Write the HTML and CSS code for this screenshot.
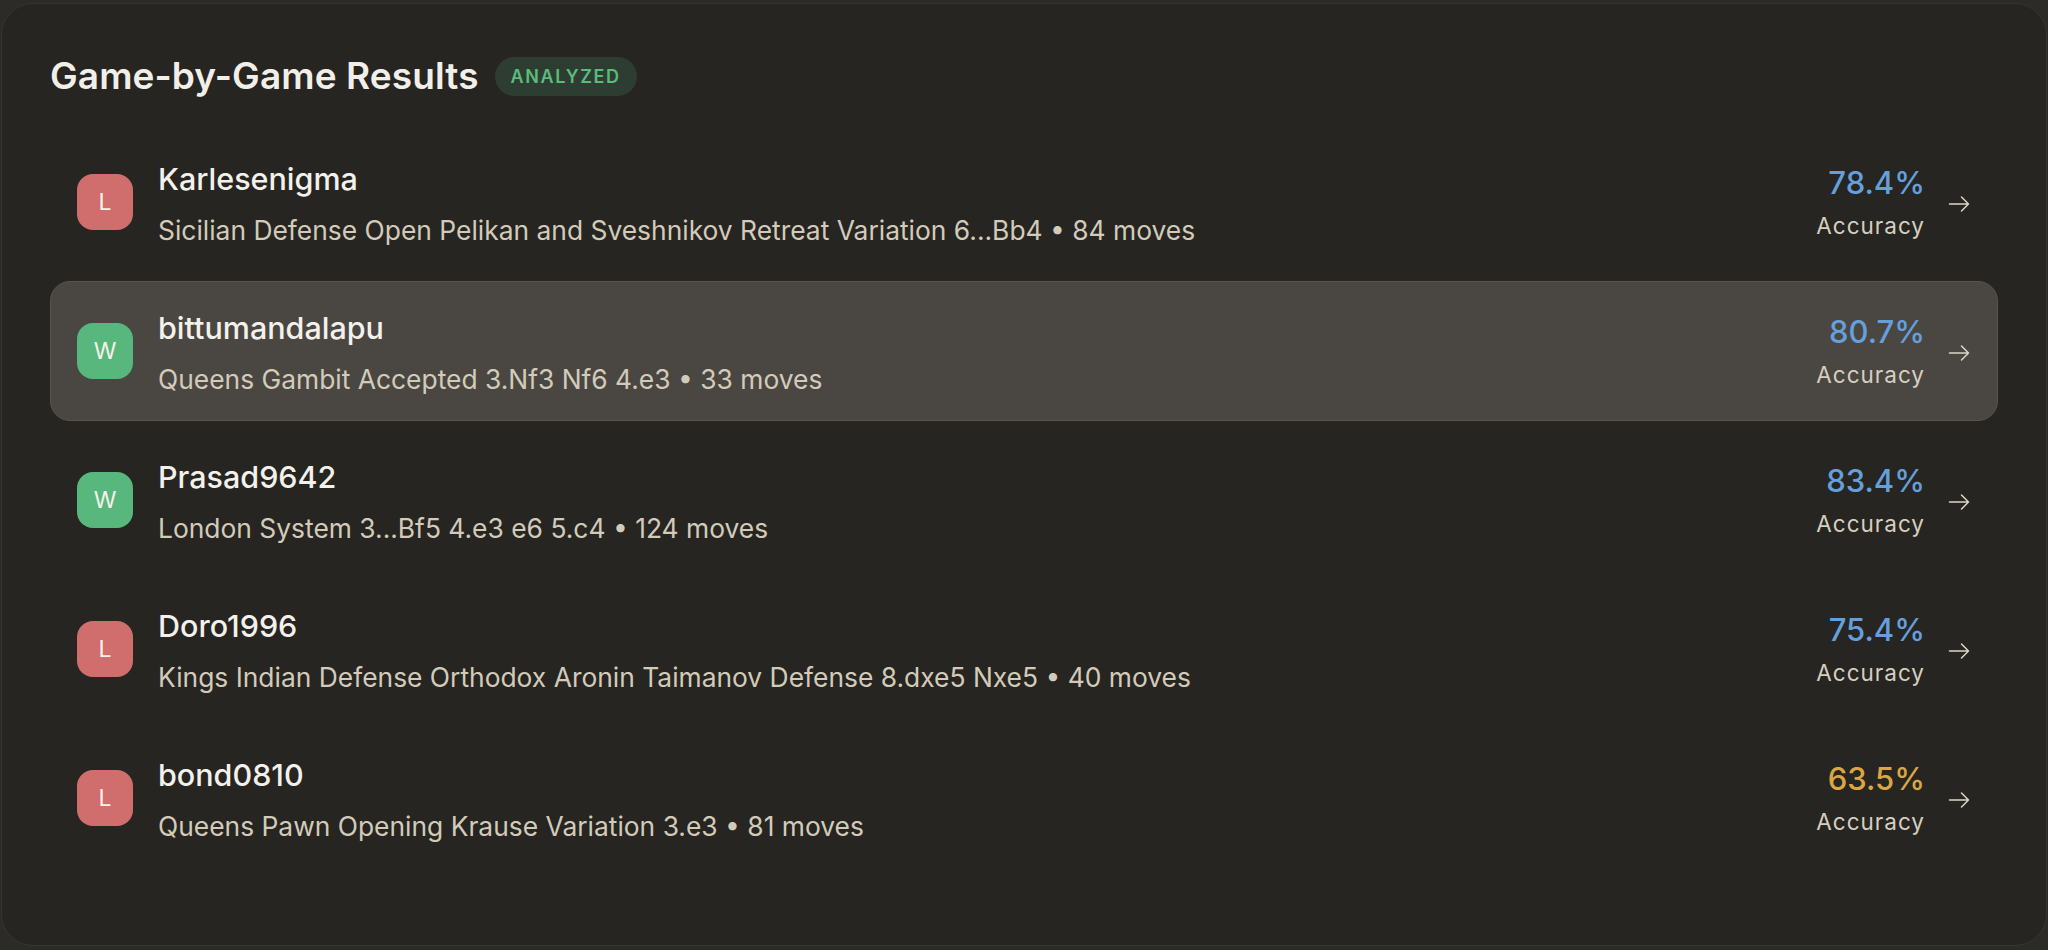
FILE: index.html
```html
<!DOCTYPE html>
<html lang="en">
<head>
<meta charset="utf-8">
<title>Game-by-Game Results</title>
<link rel="stylesheet" href="styles.css">
</head>
<body>
<section class="card">
  <header class="card-head">
    <h2 class="title">Game-by-Game Results</h2>
    <span class="badge">ANALYZED</span>
  </header>
  <ul class="games">
    <li class="game">
      <span class="avatar loss">L</span>
      <div class="info">
        <div class="name">Karlesenigma</div>
        <div class="meta">Sicilian Defense Open Pelikan and Sveshnikov Retreat Variation 6...Bb4 • 84 moves</div>
      </div>
      <div class="acc">
        <div class="acc-value blue">78.4%</div>
        <div class="acc-label">Accuracy</div>
      </div>
      <svg class="arrow" viewBox="0 0 24 24" width="24" height="24"><path d="M2.5 12h19M14.5 5l7 7-7 7" fill="none" stroke="currentColor" stroke-width="1.5" stroke-linecap="round" stroke-linejoin="round"/></svg>
    </li>
    <li class="game active">
      <span class="avatar win">W</span>
      <div class="info">
        <div class="name">bittumandalapu</div>
        <div class="meta">Queens Gambit Accepted 3.Nf3 Nf6 4.e3 • 33 moves</div>
      </div>
      <div class="acc">
        <div class="acc-value blue">80.7%</div>
        <div class="acc-label">Accuracy</div>
      </div>
      <svg class="arrow" viewBox="0 0 24 24" width="24" height="24"><path d="M2.5 12h19M14.5 5l7 7-7 7" fill="none" stroke="currentColor" stroke-width="1.5" stroke-linecap="round" stroke-linejoin="round"/></svg>
    </li>
    <li class="game">
      <span class="avatar win">W</span>
      <div class="info">
        <div class="name">Prasad9642</div>
        <div class="meta">London System 3...Bf5 4.e3 e6 5.c4 • 124 moves</div>
      </div>
      <div class="acc">
        <div class="acc-value blue">83.4%</div>
        <div class="acc-label">Accuracy</div>
      </div>
      <svg class="arrow" viewBox="0 0 24 24" width="24" height="24"><path d="M2.5 12h19M14.5 5l7 7-7 7" fill="none" stroke="currentColor" stroke-width="1.5" stroke-linecap="round" stroke-linejoin="round"/></svg>
    </li>
    <li class="game">
      <span class="avatar loss">L</span>
      <div class="info">
        <div class="name">Doro1996</div>
        <div class="meta">Kings Indian Defense Orthodox Aronin Taimanov Defense 8.dxe5 Nxe5 • 40 moves</div>
      </div>
      <div class="acc">
        <div class="acc-value blue">75.4%</div>
        <div class="acc-label">Accuracy</div>
      </div>
      <svg class="arrow" viewBox="0 0 24 24" width="24" height="24"><path d="M2.5 12h19M14.5 5l7 7-7 7" fill="none" stroke="currentColor" stroke-width="1.5" stroke-linecap="round" stroke-linejoin="round"/></svg>
    </li>
    <li class="game">
      <span class="avatar loss">L</span>
      <div class="info">
        <div class="name">bond0810</div>
        <div class="meta">Queens Pawn Opening Krause Variation 3.e3 • 81 moves</div>
      </div>
      <div class="acc">
        <div class="acc-value amber">63.5%</div>
        <div class="acc-label">Accuracy</div>
      </div>
      <svg class="arrow" viewBox="0 0 24 24" width="24" height="24"><path d="M2.5 12h19M14.5 5l7 7-7 7" fill="none" stroke="currentColor" stroke-width="1.5" stroke-linecap="round" stroke-linejoin="round"/></svg>
    </li>
  </ul>
</section>
</body>
</html>
```

FILE: styles.css
```css
* { box-sizing: border-box; }

html, body {
  margin: 0;
  padding: 0;
  background: #2c2b28;
  height: 950px;
  overflow: hidden;
}

body {
  padding: 3px 1px 4px 1px;
  font-family: Inter, "Liberation Sans", sans-serif;
}

.card {
  height: 943px;
  background: #262521;
  border: 1px solid #36342f;
  border-radius: 32px;
  padding: 50px 48px 0 48px;
}

.card-head {
  display: flex;
  align-items: center;
  gap: 16px;
  height: 44px;
}

.title {
  margin: 0;
  font-size: 37px;
  line-height: 44px;
  font-weight: 600;
  letter-spacing: 0.1px;
  color: #f2efe9;
}

.badge {
  display: inline-flex;
  align-items: center;
  height: 39px;
  padding: 0 16px;
  border-radius: 20px;
  background: #2e3d31;
  color: #5cba7c;
  font-size: 18px;
  font-weight: 600;
  letter-spacing: 1.6px;
}

.games {
  list-style: none;
  margin: 34px 0 0 0;
  padding: 0;
  display: flex;
  flex-direction: column;
  gap: 9px;
}

.game {
  display: flex;
  align-items: center;
  height: 140px;
  padding: 0 26px;
  border: 1px solid transparent;
  border-radius: 20px;
}

.game.active {
  background: #4a4743;
  border-color: #57544f;
}

.avatar {
  flex: none;
  width: 56px;
  height: 56px;
  border-radius: 16px;
  display: flex;
  align-items: center;
  justify-content: center;
  color: #f7f1ea;
  font-size: 23px;
  font-weight: 400;
}

.avatar.loss { background: #d06e6d; }
.avatar.win { background: #58b77c; }

.info {
  flex: 1;
  margin-left: 25px;
  min-width: 0;
  padding-top: 3px;
}

.name {
  font-size: 30.5px;
  line-height: 40px;
  font-weight: 500;
  color: #f4f1eb;
}

.meta {
  margin-top: 13px;
  font-size: 26.4px;
  line-height: 36px;
  color: #d3cbba;
}

.acc {
  text-align: right;
}

.acc-value {
  font-size: 31px;
  line-height: 38px;
  font-weight: 500;
}

.acc-value.blue { color: #65a0dc; }
.acc-value.amber { color: #dba745; }

.acc-label {
  margin-top: 9px;
  font-size: 22.5px;
  line-height: 30px;
  color: #d6cfc0;
  letter-spacing: 1px;
}

.arrow {
  flex: none;
  margin-left: 22px;
  margin-top: 4px;
  color: #dcd6ca;
}
```
